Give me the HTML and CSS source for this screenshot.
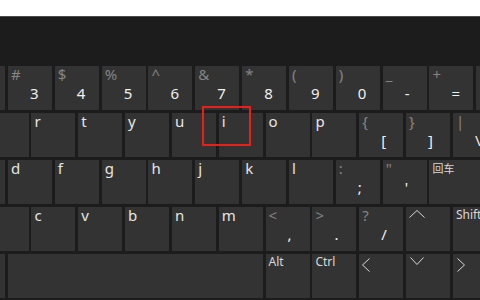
FILE: index.html
```html
<!DOCTYPE html>
<html>
<head>
  <meta charset="UTF-8">
  <title>屏幕键盘</title>
  <link rel="stylesheet" href="styles.css">
</head>
<body>

  <!-- 顶部白色窗口边 -->
  <div class="titlebar"></div>

  <div class="keyboard">
    <!-- 第一行：数字 -->
    <div class="row">
      <div class="key"></div>
      <div class="key"><span class="label sym">#</span><span class="main">3</span></div>
      <div class="key"><span class="label sym">$</span><span class="main">4</span></div>
      <div class="key"><span class="label sym">%</span><span class="main">5</span></div>
      <div class="key"><span class="label sym">^</span><span class="main">6</span></div>
      <div class="key"><span class="label sym">&amp;</span><span class="main">7</span></div>
      <div class="key"><span class="label sym">*</span><span class="main">8</span></div>
      <div class="key"><span class="label sym">(</span><span class="main">9</span></div>
      <div class="key"><span class="label sym">)</span><span class="main">0</span></div>
      <div class="key"><span class="label sym">_</span><span class="main">-</span></div>
      <div class="key"><span class="label sym">+</span><span class="main">=</span></div>
      <div class="key wide"></div>
    </div>

    <!-- 第二行 -->
    <div class="row shifted">
      <div class="key"></div>
      <div class="key"><span class="label">r</span></div>
      <div class="key"><span class="label">t</span></div>
      <div class="key"><span class="label">y</span></div>
      <div class="key"><span class="label">u</span></div>
      <div class="key"><span class="label">i</span></div>
      <div class="key"><span class="label">o</span></div>
      <div class="key"><span class="label">p</span></div>
      <div class="key"><span class="label sym">{</span><span class="main">[</span></div>
      <div class="key"><span class="label sym">}</span><span class="main">]</span></div>
      <div class="key wide"><span class="label sym">|</span><span class="main">\</span></div>
    </div>

    <!-- 第三行 -->
    <div class="row">
      <div class="key"></div>
      <div class="key"><span class="label">d</span></div>
      <div class="key"><span class="label">f</span></div>
      <div class="key"><span class="label">g</span></div>
      <div class="key"><span class="label">h</span></div>
      <div class="key"><span class="label">j</span></div>
      <div class="key"><span class="label">k</span></div>
      <div class="key"><span class="label">l</span></div>
      <div class="key"><span class="label sym">:</span><span class="main">;</span></div>
      <div class="key"><span class="label sym">"</span><span class="main">'</span></div>
      <div class="key wide"><span class="word cjk">回车</span></div>
    </div>

    <!-- 第四行 -->
    <div class="row shifted">
      <div class="key"></div>
      <div class="key"><span class="label">c</span></div>
      <div class="key"><span class="label">v</span></div>
      <div class="key"><span class="label">b</span></div>
      <div class="key"><span class="label">n</span></div>
      <div class="key"><span class="label">m</span></div>
      <div class="key"><span class="label sym">&lt;</span><span class="main">,</span></div>
      <div class="key"><span class="label sym">&gt;</span><span class="main">.</span></div>
      <div class="key"><span class="label sym">?</span><span class="main">/</span></div>
      <div class="key">
        <svg class="arrow up" width="16" height="8" viewBox="0 0 16 8"><polyline points="0.5,7.5 8,0.5 15.5,7.5"/></svg>
      </div>
      <div class="key wide"><span class="word">Shift</span></div>
    </div>

    <!-- 第五行 -->
    <div class="row">
      <div class="key"></div>
      <div class="key space"></div>
      <div class="key"><span class="word">Alt</span></div>
      <div class="key"><span class="word">Ctrl</span></div>
      <div class="key">
        <svg class="arrow left" width="8" height="14" viewBox="0 0 8 14"><polyline points="7.5,0.5 0.5,7 7.5,13.5"/></svg>
      </div>
      <div class="key">
        <svg class="arrow down" width="14" height="8" viewBox="0 0 14 8"><polyline points="0.5,0.5 7,7.5 13.5,0.5"/></svg>
      </div>
      <div class="key">
        <svg class="arrow right" width="8" height="14" viewBox="0 0 8 14"><polyline points="0.5,0.5 7.5,7 0.5,13.5"/></svg>
      </div>
    </div>
  </div>

  <!-- 红色标注框 -->
  <div class="marker"></div>

</body>
</html>
```

FILE: styles.css
```css
body {
  margin: 0;
  width: 480px;
  height: 300px;
  overflow: hidden;
  background-color: #1c1c1c;
  font-family: "Noto Sans", "Open Sans", sans-serif;
  position: relative;
}
.titlebar {
  height: 16px;
  background-color: #fff;
  border-bottom: 1px solid #4a4a4a;
}
.keyboard {
  padding-top: 49px;
  display: flex;
  flex-direction: column;
  gap: 2.8px;
}
.row {
  display: flex;
  gap: 2.84px;
  margin-left: -38.84px;
}
.row.shifted {
  margin-left: -15.42px;
}
.key {
  flex: none;
  width: 44px;
  height: 44.2px;
  background-color: #333;
  color: #e6e6e6;
}
.key.wide {
  width: 90px;
}
.key.space {
  width: 254.78px;
}
.label {
  display: block;
  padding-left: 3px;
  font-size: 15px;
  line-height: 17px;
}
.sym {
  color: #858585;
}
.main {
  display: block;
  padding-left: 22px;
  font-size: 15px;
  line-height: 20px;
  color: #f0f0f0;
}
.word {
  display: block;
  padding-left: 3px;
  font-size: 12px;
  line-height: 16px;
  color: #d8d8d8;
}
.cjk {
  font-family: "Noto Sans CJK SC", sans-serif;
  font-size: 11px;
}
.arrow {
  display: block;
  fill: none;
  stroke: #d8d8d8;
  stroke-width: 1;
}
.arrow.up {
  margin: 3px 0 0 3px;
}
.arrow.down {
  margin: 3px 0 0 4px;
}
.arrow.left {
  margin: 4px 0 0 3px;
}
.arrow.right {
  margin: 4px 0 0 4px;
}
.marker {
  position: absolute;
  left: 202px;
  top: 106px;
  width: 49px;
  height: 40px;
  box-sizing: border-box;
  border: 2px solid #e8201c;
}
```
